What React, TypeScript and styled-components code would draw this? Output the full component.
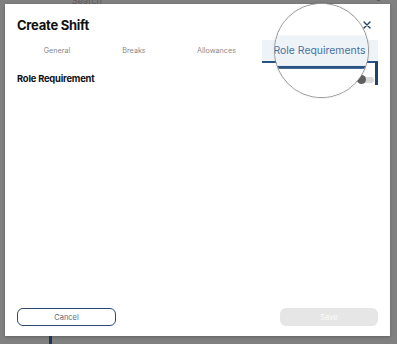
import styled, { createGlobalStyle } from 'styled-components'

const GlobalStyle = createGlobalStyle`
  html, body {
    margin: 0;
    padding: 0;
  }
  body {
    background: #808080;
    font-family: Inter, 'Noto Sans', sans-serif;
    overflow: hidden;
  }
`

const Backdrop = styled.div`
  position: relative;
  width: 397px;
  height: 344px;
  overflow: hidden;
  background: #808080;
`

const Scene = styled.div`
  width: 397px;
  height: 344px;
  display: flex;
  flex-direction: column;
  background: #808080;
`

const BehindBar = styled.div`
  height: 4px;
  display: flex;
  align-items: flex-end;
  justify-content: space-between;
  padding: 0 14px 0 72px;
  overflow: hidden;
`

const SearchText = styled.span`
  font-size: 9px;
  line-height: 9px;
  color: #5c5c5c;
  margin-bottom: -1px;
`

const BehindFooter = styled.div`
  flex: 1;
  display: flex;
  padding-left: 49px;
`

const NavLine = styled.div`
  width: 3px;
  background: #1d3554;
`

const Modal = styled.div`
  margin-left: 5px;
  width: 385px;
  height: 332px;
  box-sizing: border-box;
  padding: 13px 12px 10px;
  background: #fff;
  display: flex;
  flex-direction: column;
  box-shadow: 0 1px 3px rgba(0, 0, 0, 0.25);
`

const Header = styled.div`
  height: 16px;
  display: flex;
  align-items: center;
  justify-content: space-between;
`

const Title = styled.h1`
  margin: 0;
  font-size: 13px;
  line-height: 16px;
  font-weight: 700;
  letter-spacing: -0.25px;
  color: #111;
`

const CloseButton = styled.button`
  width: 22px;
  height: 16px;
  padding: 0;
  border: 0;
  background: none;
  display: flex;
  align-items: center;
  justify-content: center;
`

const TabRow = styled.div`
  margin-top: 7px;
  display: flex;
`

const Tab = styled.div<{ $w: number; $active?: boolean }>`
  width: ${(p) => p.$w}px;
  height: 21px;
  display: flex;
  align-items: center;
  justify-content: center;
  font-size: 7.2px;
  white-space: nowrap;
  color: ${(p) => (p.$active ? '#4a72a0' : '#8a8a8a')};
  background: ${(p) => (p.$active ? '#eef3f8' : 'transparent')};
  border-bottom: 2px solid ${(p) => (p.$active ? '#2a5384' : 'transparent')};
`

const TabLabel = styled.span<{ $covered?: boolean }>`
  visibility: ${(p) => (p.$covered ? 'hidden' : 'visible')};
`

const ContentArea = styled.div`
  flex: 1;
  display: flex;
`

const Body = styled.div`
  flex: 1;
  padding: 10px 1px 0 0;
`

const SectionRow = styled.div`
  height: 12px;
  display: flex;
  align-items: flex-start;
  justify-content: space-between;
`

const SectionTitle = styled.h2`
  margin: 0;
  font-size: 9.4px;
  line-height: 12px;
  font-weight: 700;
  letter-spacing: -0.2px;
  color: #111;
`

const Toggle = styled.div`
  margin-top: 2px;
  width: 17px;
  height: 9px;
  display: flex;
  align-items: center;
  position: relative;
`

const Track = styled.div`
  width: 17px;
  height: 6px;
  border-radius: 3px;
  background: #d8d8d8;
`

const Knob = styled.div`
  position: absolute;
  left: 0;
  top: 0;
  width: 9px;
  height: 9px;
  border-radius: 50%;
  background: #5f5f5f;
`

const ScrollThumb = styled.div`
  width: 3px;
  height: 23px;
  margin-top: -1px;
  background: #22426b;
`

const Footer = styled.div`
  display: flex;
  justify-content: space-between;
`

const CancelButton = styled.button`
  width: 99px;
  height: 18px;
  border: 1.5px solid #2e4a6a;
  border-radius: 6px;
  background: #fff;
  font-family: inherit;
  font-size: 7.5px;
  color: #5a6b7d;
`

const SaveButton = styled.button`
  width: 98px;
  height: 18px;
  border: 0;
  border-radius: 6px;
  background: #e6e6e6;
  font-family: inherit;
  font-size: 7.5px;
  color: #fafafa;
`

const Magnifier = styled.div`
  position: absolute;
  left: 274px;
  top: 3px;
  width: 93px;
  height: 93px;
  border-radius: 50%;
  border: 1px solid #8d8d8d;
  overflow: hidden;
  background: #fff;
  box-shadow: 0 0 2px rgba(0, 0, 0, 0.15);
`

const Lens = styled.div`
  position: absolute;
  left: -275px;
  top: -4px;
  transform-origin: 321px 50px;
  transform: scale(1.45);
`

const tabs = [
  { label: 'General', w: 80 },
  { label: 'Breaks', w: 74 },
  { label: 'Allowances', w: 91 },
  { label: 'Role Requirements', w: 116, active: true },
]

// lens = the magnified copy; only the active tab's label is drawn inside it
const ScreenContent = ({ lens = false }: { lens?: boolean }) => (
  <Scene>
    <BehindBar>
      <SearchText>{lens ? '' : 'Search'}</SearchText>
      <svg width="8" height="8" viewBox="0 0 8 8">
        <circle cx="3.5" cy="1" r="3" fill="none" stroke="#333" strokeWidth="1.2" />
      </svg>
    </BehindBar>
    <Modal>
      <Header>
        <Title>{lens ? '' : 'Create Shift'}</Title>
        <CloseButton aria-label="Close">
          <svg width="8" height="8" viewBox="0 0 8 8">
            <path d="M1 1 L7 7 M7 1 L1 7" stroke="#1f3f66" strokeWidth="1.4" strokeLinecap="round" />
          </svg>
        </CloseButton>
      </Header>
      <TabRow>
        {tabs.map((t) => (
          <Tab key={t.label} $w={t.w} $active={t.active}>
            {lens && !t.active ? null : <TabLabel $covered={!lens && t.active}>{t.label}</TabLabel>}
          </Tab>
        ))}
      </TabRow>
      <ContentArea>
        <Body>
          <SectionRow>
            <SectionTitle>{lens ? '' : 'Role Requirement'}</SectionTitle>
            <Toggle>
              <Track />
              <Knob />
            </Toggle>
          </SectionRow>
        </Body>
        <ScrollThumb />
      </ContentArea>
      <Footer>
        <CancelButton>{lens ? '' : 'Cancel'}</CancelButton>
        <SaveButton>{lens ? '' : 'Save'}</SaveButton>
      </Footer>
    </Modal>
    <BehindFooter>
      <NavLine />
    </BehindFooter>
  </Scene>
)

export default function App() {
  return (
    <>
      <GlobalStyle />
      <Backdrop>
        <ScreenContent />
        <Magnifier aria-hidden="true">
          <Lens>
            <ScreenContent lens />
          </Lens>
        </Magnifier>
      </Backdrop>
    </>
  )
}
